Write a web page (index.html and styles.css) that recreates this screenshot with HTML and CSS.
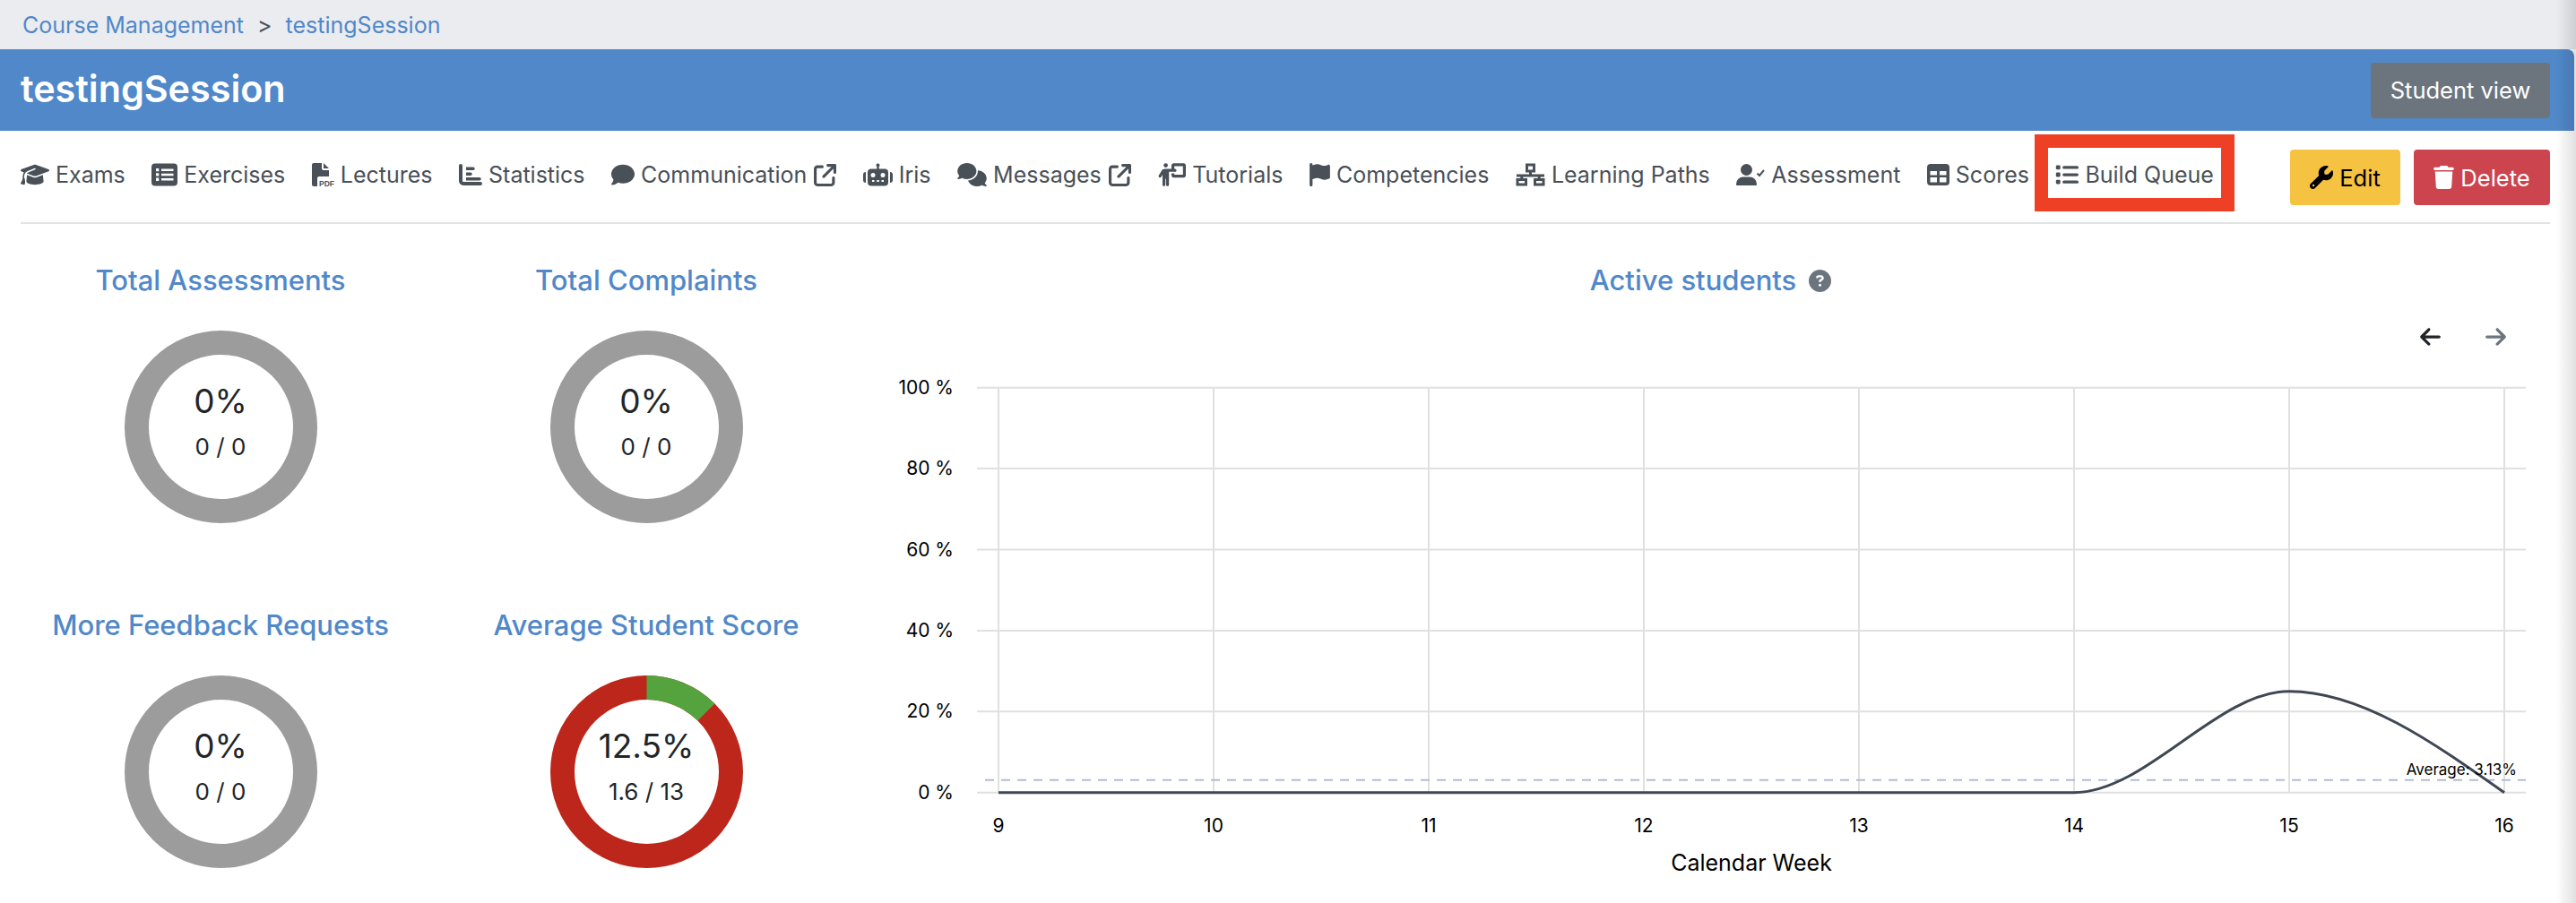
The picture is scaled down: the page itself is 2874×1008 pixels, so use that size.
FILE: index.html
```html
<!DOCTYPE html>
<html lang="en">
<head>
<meta charset="utf-8">
<title>testingSession</title>
<link rel="stylesheet" href="styles.css">
</head>
<body>
<svg class="sprite" aria-hidden="true">
  <symbol id="i-ext" viewBox="0 0 512 512"><path d="M320 0c-17.7 0-32 14.3-32 32s14.3 32 32 32h82.7L201.4 265.4c-12.5 12.5-12.5 32.8 0 45.3s32.8 12.5 45.3 0L448 109.3V192c0 17.7 14.3 32 32 32s32-14.3 32-32V32c0-17.7-14.3-32-32-32H320zM80 32C35.8 32 0 67.8 0 112V432c0 44.2 35.8 80 80 80H400c44.2 0 80-35.8 80-80V320c0-17.7-14.3-32-32-32s-32 14.3-32 32V432c0 8.8-7.2 16-16 16H80c-8.8 0-16-7.2-16-16V112c0-8.8 7.2-16 16-16H192c17.7 0 32-14.3 32-32s-14.3-32-32-32H80z"/></symbol>
</svg>

<nav class="breadcrumb">
  <a class="crumb">Course Management</a>
  <span class="crumb-sep">&gt;</span>
  <a class="crumb">testingSession</a>
</nav>

<header class="course-header">
  <h1 class="course-title">testingSession</h1>
  <button class="btn btn-grey">Student view</button>
</header>

<div class="toolbar">
  <ul class="tabs">
    <li class="tab"><svg class="ico w-32" viewBox="0 0 640 512"><path d="M320 32c-8.1 0-16.1 1.4-23.7 4.1L15.8 137.4C6.3 140.9 0 149.9 0 160s6.3 19.1 15.8 22.6l57.9 20.9C57.3 229.3 48 259.8 48 291.9v28.1c0 28.4-10.8 57.7-22.3 80.8c-6.5 13-13.9 25.8-22.5 37.6C0 442.7-.9 448.3 .9 453.4s6 8.9 11.2 10.2l64 16c4.2 1.1 8.7 .3 12.4-2s6.3-6.1 7.1-10.4c8.6-42.8 4.3-81.2-2.1-108.7C90.3 344.3 86 329.8 80 316.5V291.9c0-30.2 10.2-58.7 27.9-81.5c12.9-15.5 29.6-28 49.2-35.7l157-61.7c8.2-3.2 17.5 .8 20.7 9s-.8 17.5-9 20.7l-157 61.7c-12.4 4.9-23.3 12.4-32.2 21.6l159.6 57.6c7.6 2.7 15.6 4.1 23.7 4.1s16.1-1.4 23.7-4.1L624.2 182.6c9.5-3.4 15.8-12.5 15.8-22.6s-6.3-19.1-15.8-22.6L343.7 36.1C336.1 33.4 328.1 32 320 32zM128 408c0 35.3 86 72 192 72s192-36.7 192-72L496.7 262.6 354.5 314c-11.1 4-22.8 6-34.5 6s-23.5-2-34.5-6L143.3 262.6 128 408z"/></svg>Exams</li>
    <li class="tab"><svg class="ico w-29" viewBox="0 0 29 25"><path fill-rule="evenodd" d="M4 0H25a4 4 0 0 1 4 4V21a4 4 0 0 1-4 4H4a4 4 0 0 1-4-4V4a4 4 0 0 1 4-4ZM5 5.500v3.300h3.300V5.500ZM5 10.800v3.300h3.300v-3.300ZM5 16.100v3.300h3.300v-3.300ZM11 5.900v2.500h13.500V5.900ZM11 11.200v2.500h13.500v-2.500ZM11 16.500v2.500h13.500V16.500Z"/></svg>Exercises</li>
    <li class="tab"><svg class="ico w-25" viewBox="0 0 25 26"><path d="M2 0H11V6a2 2 0 0 0 2 2H19V15H8a2 2 0 0 0-2 2V26H2a2 2 0 0 1-2-2V2A2 2 0 0 1 2 0ZM13 0l6 6H13Z"/><text class="pdf-mark" x="8" y="25.500" textLength="17" lengthAdjust="spacingAndGlyphs">PDF</text></svg>Lectures</li>
    <li class="tab"><svg class="ico w-26" viewBox="0 0 26 24"><path d="M0 2a2 2 0 0 1 4 0V19a1 1 0 0 0 1 1H24a2 2 0 0 1 0 4H5a5 5 0 0 1-5-5ZM8 3.500H16a1.700 1.700 0 0 1 0 3.500H8ZM8 9.500H13a1.700 1.700 0 0 1 0 3.500H8ZM8 15H23a1.700 1.700 0 0 1 0 3.500H8Z"/></svg>Statistics</li>
    <li class="tab"><svg class="ico w-26" viewBox="0 0 512 512"><path d="M512 240c0 114.9-114.6 208-256 208c-37.1 0-72.3-6.4-104.1-17.9c-11.9 8.7-31.3 20.6-54.3 30.6C73.6 471.1 44.7 480 16 480c-6.5 0-12.3-3.9-14.8-9.9c-2.5-6-1.1-12.8 3.4-17.4l.3-.3c.3-.3 .7-.7 1.3-1.4c1.1-1.2 2.8-3.1 4.9-5.7c4.1-5 9.6-12.4 15.2-21.6c10-16.6 19.5-38.4 21.4-62.9C17.7 326.8 0 285.1 0 240C0 125.1 114.6 32 256 32s256 93.1 256 208z"/></svg>Communication<svg class="ico ext"><use href="#i-ext"/></svg></li>
    <li class="tab"><svg class="ico w-33" viewBox="0 0 33 25"><path fill-rule="evenodd" d="M16.500 0a2 2 0 0 1 1.200 3.600V6H24a4 4 0 0 1 4 4V21a4 4 0 0 1-4 4H9a4 4 0 0 1-4-4V10a4 4 0 0 1 4-4h6.300V3.600A2 2 0 0 1 16.500 0ZM11 10.500a2.500 2.500 0 1 0 0 5 2.500 2.500 0 0 0 0-5ZM22 10.500a2.500 2.500 0 1 0 0 5 2.500 2.500 0 0 0 0-5ZM10 18.500v2h2.500v-2ZM15.300 18.500v2h2.500v-2ZM20.500 18.500v2H23v-2ZM3 9.500V21.500a3 3 0 0 1-3-3V12.500a3 3 0 0 1 3-3ZM30 9.500a3 3 0 0 1 3 3v6a3 3 0 0 1-3 3Z"/></svg>Iris</li>
    <li class="tab"><svg class="ico w-33" viewBox="0 0 640 512"><path d="M208 352c114.9 0 208-78.8 208-176S322.9 0 208 0S0 78.8 0 176c0 38.6 14.7 74.3 39.6 103.4c-3.5 9.4-8.7 17.7-14.2 24.7c-4.8 6.2-9.7 11-13.3 14.3c-1.8 1.6-3.3 2.9-4.3 3.7c-.5 .4-.9 .7-1.1 .8l-.2 .2C1 327.2-1.4 334.4 .8 340.9S9.1 352 16 352c21.8 0 43.8-5.6 62.1-12.5c9.2-3.5 17.8-7.4 25.3-11.4C134.1 343.3 169.8 352 208 352zM448 176c0 112.3-99.1 196.9-216.5 207C255.8 457.4 336.4 512 432 512c38.2 0 73.9-8.7 104.7-23.9c7.5 4 16 7.9 25.2 11.4c18.3 6.9 40.3 12.5 62.1 12.5c6.900 0 13.100-4.500 15.200-11.100c2.100-6.600-.2-13.800-5.800-17.900l-.2-.2c-.2-.2-.6-.4-1.100-.8c-1-.8-2.500-2-4.300-3.700c-3.600-3.300-8.500-8.100-13.300-14.300c-5.500-7-10.700-15.400-14.200-24.700c24.900-29 39.600-64.700 39.600-103.400c0-92.800-84.900-168.900-192.600-175.500c.4 5.100 .6 10.300 .6 15.500z"/></svg>Messages<svg class="ico ext"><use href="#i-ext"/></svg></li>
    <li class="tab"><svg class="ico w-32" viewBox="0 0 640 512"><path d="M192 96a48 48 0 1 0 0-96 48 48 0 1 0 0 96zm-8 384V352h16V480c0 17.700 14.300 32 32 32s32-14.300 32-32V192h56 64 16c17.700 0 32-14.300 32-32s-14.300-32-32-32H384V64H576V256H384V224H320v48c0 26.500 21.500 48 48 48H592c26.500 0 48-21.500 48-48V48c0-26.500-21.500-48-48-48H368c-26.500 0-48 21.500-48 48v80H243.100 177.100c-33.700 0-64.900 17.700-82.300 46.600l-58.300 97c-9.100 15.100-4.200 34.800 10.900 43.900s34.800 4.200 43.900-10.900L120 256.900V480c0 17.700 14.300 32 32 32s32-14.300 32-32z"/></svg>Tutorials</li>
    <li class="tab"><svg class="ico w-23" viewBox="0 0 448 512"><path d="M64 32C64 14.300 49.700 0 32 0S0 14.300 0 32V64 368 480c0 17.700 14.300 32 32 32s32-14.300 32-32V352l64.300-16.100c41.100-10.300 84.600-5.500 122.500 13.400c44.200 22.100 95.500 24.800 141.700 7.400l34.700-13c12.500-4.700 20.800-16.600 20.800-30V66.100c0-23-24.200-38-44.800-27.700l-9.600 4.800c-46.300 23.200-100.800 23.200-147.100 0c-35.100-17.600-75.400-22-113.500-12.500L64 48V32z"/></svg>Competencies</li>
    <li class="tab"><svg class="ico w-33" viewBox="0 0 33 25"><path class="outline" d="M12.500 1.500h8v7h-8ZM2 18h9.500v5.500H2ZM21.500 18H31v5.500H21.500ZM1 13.500H32M16.500 8.500v5M6.800 13.500V18M26.200 13.500V18"/></svg>Learning Paths</li>
    <li class="tab"><svg class="ico w-32" viewBox="0 0 32 24"><path d="M11.500 0a6.500 6.500 0 1 1 0 13 6.500 6.500 0 0 1 0-13ZM8 14.500h7a8 8 0 0 1 8 8V23a1 1 0 0 1-1 1H1a1 1 0 0 1-1-1v-.5a8 8 0 0 1 8-8Z"/><path class="check" d="M23.500 10.500l2.500 2.500L31 7"/></svg>Assessment</li>
    <li class="tab"><svg class="ico w-25" viewBox="0 0 25 24"><path fill-rule="evenodd" d="M4 0H21a4 4 0 0 1 4 4V20a4 4 0 0 1-4 4H4a4 4 0 0 1-4-4V4a4 4 0 0 1 4-4ZM3.500 8v4.500h7.500V8ZM14 8v4.500h7.500V8ZM3.500 15v5.500h7.500V15ZM14 15v5.500h7.500V15Z"/></svg>Scores</li>
    <li class="tab tab-marked"><svg class="ico w-26" viewBox="0 0 512 512"><path d="M40 48C26.700 48 16 58.700 16 72v48c0 13.300 10.700 24 24 24H88c13.300 0 24-10.700 24-24V72c0-13.300-10.700-24-24-24H40zM192 64c-17.700 0-32 14.300-32 32s14.300 32 32 32H480c17.700 0 32-14.300 32-32s-14.300-32-32-32H192zm0 160c-17.700 0-32 14.300-32 32s14.300 32 32 32H480c17.700 0 32-14.300 32-32s-14.300-32-32-32H192zm0 160c-17.700 0-32 14.300-32 32s14.300 32 32 32H480c17.700 0 32-14.300 32-32s-14.300-32-32-32H192zM16 232v48c0 13.300 10.700 24 24 24H88c13.300 0 24-10.700 24-24V232c0-13.300-10.700-24-24-24H40c-13.300 0-24 10.700-24 24zM40 368c-13.300 0-24 10.700-24 24v48c0 13.300 10.700 24 24 24H88c13.300 0 24-10.700 24-24V392c0-13.300-10.700-24-24-24H40z"/></svg>Build Queue</li>
  </ul>
  <div class="actions">
    <button class="btn btn-yellow"><svg class="btn-ico" viewBox="0 0 512 512"><path d="M352 320c88.400 0 160-71.600 160-160c0-15.300-2.200-30.100-6.200-44.200c-3.100-10.800-16.400-13.200-24.300-5.300l-76.800 76.800c-3 3-7.100 4.700-11.300 4.700H336c-8.800 0-16-7.200-16-16V118.600c0-4.200 1.700-8.300 4.700-11.300l76.800-76.800c7.900-7.900 5.400-21.200-5.300-24.300C382.100 2.200 367.300 0 352 0C263.600 0 192 71.600 192 160c0 19.100 3.400 37.500 9.500 54.500L19.900 396.100C7.200 408.800 0 426.100 0 444.100C0 481.600 30.400 512 67.900 512c18 0 35.300-7.200 48-19.900L297.500 310.500c17 6.200 35.400 9.500 54.500 9.500zM80 408a24 24 0 1 1 0 48 24 24 0 1 1 0-48z"/></svg>Edit</button>
    <button class="btn btn-red"><svg class="btn-ico trash" viewBox="0 0 448 512"><path d="M135.200 17.700L128 32H32C14.300 32 0 46.300 0 64S14.300 96 32 96H416c17.700 0 32-14.300 32-32s-14.300-32-32-32H320l-7.200-14.300C307.400 6.800 296.300 0 284.200 0H163.800c-12.100 0-23.200 6.800-28.600 17.700zM416 128H32L53.200 467c1.600 25.300 22.600 45 47.900 45H346.900c25.300 0 46.300-19.700 47.900-45L416 128z"/></svg>Delete</button>
  </div>
</div>

<main class="dashboard">
  <section class="rings">
    <div class="ring-card">
      <h2 class="card-title">Total Assessments</h2>
      <div class="ring">
        <svg class="ring-svg" viewBox="0 0 215 215"><circle class="ring-bg" cx="107.500" cy="107.500" r="94"/></svg>
        <div class="ring-text"><span class="ring-pct">0%</span><span class="ring-val">0 / 0</span></div>
      </div>
    </div>
    <div class="ring-card">
      <h2 class="card-title">Total Complaints</h2>
      <div class="ring">
        <svg class="ring-svg" viewBox="0 0 215 215"><circle class="ring-bg" cx="107.500" cy="107.500" r="94"/></svg>
        <div class="ring-text"><span class="ring-pct">0%</span><span class="ring-val">0 / 0</span></div>
      </div>
    </div>
    <div class="ring-card">
      <h2 class="card-title">More Feedback Requests</h2>
      <div class="ring">
        <svg class="ring-svg" viewBox="0 0 215 215"><circle class="ring-bg" cx="107.500" cy="107.500" r="94"/></svg>
        <div class="ring-text"><span class="ring-pct">0%</span><span class="ring-val">0 / 0</span></div>
      </div>
    </div>
    <div class="ring-card">
      <h2 class="card-title">Average Student Score</h2>
      <div class="ring">
        <svg class="ring-svg" viewBox="0 0 215 215">
          <circle class="ring-red" cx="107.500" cy="107.500" r="94"/>
          <path class="ring-green" d="M107.500 13.500A94 94 0 0 1 173.970 41.030"/>
        </svg>
        <div class="ring-text"><span class="ring-pct">12.5%</span><span class="ring-val">1.6 / 13</span></div>
      </div>
    </div>
  </section>

  <section class="chart-panel">
    <div class="chart-head">
      <h2 class="card-title">Active students</h2>
      <svg class="help" viewBox="0 0 512 512"><path d="M256 512A256 256 0 1 0 256 0a256 256 0 1 0 0 512zM169.800 165.300c7.900-22.300 29.100-37.300 52.800-37.300h58.300c34.900 0 63.100 28.300 63.100 63.100c0 22.600-12.100 43.500-31.700 54.800L280 264.400c-.2 13-10.900 23.600-24 23.600c-13.300 0-24-10.700-24-24V250.500c0-8.600 4.600-16.500 12.100-20.800l44.300-25.400c4.700-2.700 7.600-7.700 7.600-13.100c0-8.400-6.800-15.100-15.100-15.100H222.600c-3.400 0-6.400 2.100-7.500 5.300l-.4 1.200c-4.400 12.500-18.200 19-30.600 14.600s-19-18.200-14.600-30.600l.4-1.200zM224 352a32 32 0 1 1 64 0 32 32 0 1 1 -64 0z"/></svg>
    </div>
    <div class="chart-nav">
      <svg class="arrow" viewBox="0 0 448 512"><path d="M9.400 233.400c-12.500 12.500-12.500 32.800 0 45.300l160 160c12.500 12.500 32.800 12.500 45.300 0s12.500-32.800 0-45.300L109.300 288 416 288c17.700 0 32-14.300 32-32s-14.300-32-32-32l-306.700 0L214.600 118.600c12.500-12.500 12.500-32.800 0-45.300s-32.800-12.500-45.300 0l-160 160z"/></svg>
      <svg class="arrow arrow-off" viewBox="0 0 448 512"><path d="M438.600 278.600c12.500-12.500 12.500-32.800 0-45.300l-160-160c-12.500-12.500-32.800-12.500-45.300 0s-12.500 32.800 0 45.300L338.700 224 32 224c-17.700 0-32 14.300-32 32s14.300 32 32 32l306.700 0L233.400 393.400c-12.500 12.500-12.500 32.800 0 45.300s32.800 12.500 45.300 0l160-160z"/></svg>
    </div>
    <svg class="chart" viewBox="-16 0 1908 608">
      <g class="grid">
        <path d="M124 32.700H1852M124 123.100H1852M124 213.500H1852M124 303.900H1852M124 394.300H1852M124 484.700H1852"/>
        <path d="M148 32.700V484.700M388 32.700V484.700M628 32.700V484.700M868 32.700V484.700M1108 32.700V484.700M1348 32.700V484.700M1588 32.700V484.700M1828 32.700V484.700"/>
      </g>
      <path class="avg" d="M133 470.700H1852"/>
      <path class="line" d="M148 484.700H1348C1428 484.700 1508 371.700 1588 371.700C1668 371.700 1748 428.200 1828 484.700"/>
      <g class="y-labels">
        <text x="98" y="40">100 %</text>
        <text x="98" y="130">80 %</text>
        <text x="98" y="221">60 %</text>
        <text x="98" y="311">40 %</text>
        <text x="98" y="401">20 %</text>
        <text x="98" y="492">0 %</text>
      </g>
      <g class="x-labels">
        <text x="148" y="529">9</text>
        <text x="388" y="529">10</text>
        <text x="628" y="529">11</text>
        <text x="868" y="529">12</text>
        <text x="1108" y="529">13</text>
        <text x="1348" y="529">14</text>
        <text x="1588" y="529">15</text>
        <text x="1828" y="529">16</text>
      </g>
      <text class="avg-label" x="1842" y="465">Average: 3.13%</text>
      <text class="axis-title" x="988" y="572">Calendar Week</text>
    </svg>
  </section>
</main>
<div class="edge-shade"></div>
</body>
</html>
```

FILE: styles.css
```css
* { box-sizing: border-box; }
html, body { margin: 0; height: 100%; }
body {
  position: relative;
  width: 2874px;
  height: 1008px;
  overflow: hidden;
  background: #fff;
  color: #212529;
  font-family: Inter, "Liberation Sans", sans-serif;
  font-size: 25px;
}
.sprite { display: none; }

.breadcrumb {
  height: 55px;
  background: #ebecf0;
  display: flex;
  align-items: center;
  gap: 15px;
  padding: 0 25px;
  color: #495057;
}
.crumb { color: #5088c9; }

.course-header {
  height: 91px;
  background: #5088c9;
  border-top-right-radius: 8px;
  display: flex;
  align-items: center;
  justify-content: space-between;
  padding: 0 27px 0 23px;
  margin-right: 2px;
}
.course-title {
  margin: 0 0 3px;
  font-size: 41.300px;
  font-weight: 600;
  color: #fff;
}

.btn {
  display: inline-flex;
  align-items: center;
  justify-content: center;
  height: 62px;
  border: 0;
  border-radius: 4px;
  font-family: inherit;
  font-size: 25.500px;
  padding: 0;
}
.btn-grey { background: #6c757d; color: #fff; width: 200px; }
.btn-yellow { background: #f5c242; color: #000; width: 123px; gap: 7px; }
.btn-red { background: #cb444e; color: #fff; width: 152px; gap: 7px; }
.btn-ico { width: 26px; height: 26px; fill: currentColor; }
.trash { width: 23px; }

.toolbar {
  height: 104px;
  margin: 0 29px 0 23px;
  border-bottom: 2px solid #e2e3e5;
  display: flex;
  justify-content: space-between;
  align-items: flex-start;
}
.tabs {
  list-style: none;
  margin: 0;
  padding: 34px 0 0;
  display: flex;
  gap: 29.500px;
  color: #495057;
}
.tab {
  display: flex;
  align-items: center;
  height: 30px;
  gap: 7px;
  white-space: nowrap;
}
.tab-marked { position: relative; }
.tab-marked::after {
  content: "";
  position: absolute;
  left: -23px;
  right: -23px;
  top: -30px;
  bottom: -26px;
  border: 15px solid #ee4025;
}
.ico { height: 26px; fill: #495057; flex: none; }
.w-23 { width: 23px; }
.w-25 { width: 25px; }
.w-26 { width: 26px; }
.w-29 { width: 29px; }
.w-32 { width: 32px; }
.w-33 { width: 33px; }
.ext { width: 25px; height: 25px; margin-left: 1px; }
.pdf-mark { font-size: 9px; font-weight: 700; fill: #495057; font-family: "Liberation Sans", sans-serif; }
.outline { fill: none; stroke: #495057; stroke-width: 3; }
.check { fill: none; stroke: #495057; stroke-width: 2; }
.actions {
  display: flex;
  gap: 15px;
  margin-top: 21px;
}

.dashboard {
  display: flex;
  align-items: flex-start;
  padding: 0 29px 0 0;
}
.rings {
  width: 950px;
  display: grid;
  grid-template-columns: 492px 458px;
  padding-top: 44px;
  row-gap: 95px;
}
.ring-card {
  display: flex;
  flex-direction: column;
  align-items: center;
}
.ring-card:nth-child(even) { width: 458px; }
.card-title {
  margin: 0;
  height: 38px;
  line-height: 38px;
  font-size: 31px;
  font-weight: 500;
  color: #5088c9;
  white-space: nowrap;
}
.ring {
  position: relative;
  width: 215px;
  height: 215px;
  margin-top: 37px;
}
.ring-svg { display: block; width: 215px; height: 215px; }
.ring-bg, .ring-red, .ring-green { fill: none; stroke-width: 27; }
.ring-bg { stroke: #9c9c9c; }
.ring-red { stroke: #bd261a; }
.ring-green { stroke: #54a33e; }
.ring-text {
  position: absolute;
  inset: 0;
  display: flex;
  flex-direction: column;
  align-items: center;
  padding-top: 56px;
}
.ring-pct { font-size: 37px; line-height: 46px; }
.ring-val { font-size: 26px; line-height: 30px; margin-top: 13px; }

.chart-panel {
  flex: 1;
  padding-top: 44px;
  position: relative;
}
.chart-head {
  display: flex;
  justify-content: center;
  align-items: center;
  gap: 14px;
  margin-left: 22px;
}
.help { width: 25px; height: 25px; fill: #6c757d; }
.chart-nav {
  display: flex;
  justify-content: flex-end;
  gap: 50px;
  height: 26px;
  margin-top: 31px;
  padding-right: 49px;
}
.arrow { width: 23px; height: 26px; fill: #212529; }
.arrow-off { fill: #6c757d; }
.chart {
  position: absolute;
  left: 0;
  top: 150px;
  width: 1908px;
  height: 608px;
}
.grid path { fill: none; stroke: #e0e0e0; stroke-width: 2; }
.avg { fill: none; stroke: #b5bbd2; stroke-width: 2; stroke-dasharray: 10 8; }
.line { fill: none; stroke: #3f4754; stroke-width: 3; }
.y-labels text { text-anchor: end; font-size: 21px; fill: #000; }
.x-labels text { text-anchor: middle; font-size: 21px; fill: #000; }
.avg-label { text-anchor: end; font-size: 17px; fill: #000; }
.axis-title { text-anchor: middle; font-size: 25px; fill: #000; }

.edge-shade {
  position: absolute;
  right: 0;
  top: 0;
  width: 22px;
  height: 100%;
  background: linear-gradient(to right, rgba(0,0,0,0), rgba(0,0,0,.12));
  pointer-events: none;
}
```
